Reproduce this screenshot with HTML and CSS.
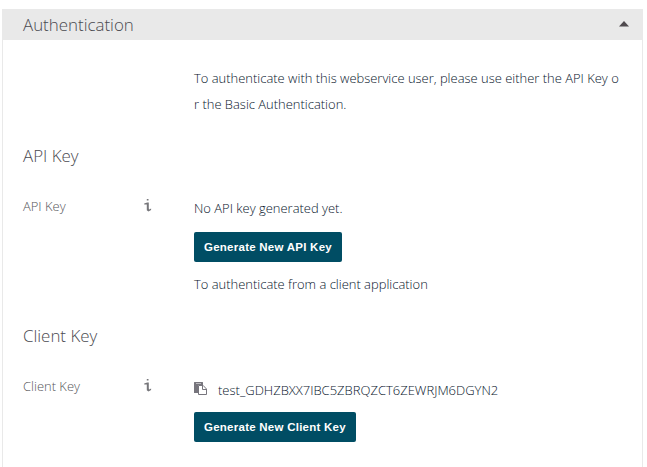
FILE: index.html
```html
<!DOCTYPE html>
<html lang="en">
<head>
<meta charset="utf-8">
<title>Authentication</title>
<link rel="stylesheet" href="styles.css">
</head>
<body>
<main class="panel">
  <header class="panel-header">
    <h1>Authentication</h1>
    <svg class="caret" viewBox="0 0 10 6"><path d="M0 5.5 5 0l5 5.5z"/></svg>
  </header>
  <div class="panel-body">
    <p class="intro">To authenticate with this webservice user, please use either the API Key or the Basic Authentication.</p>
    <h2>API Key</h2>
    <section class="row">
      <span class="label">API Key</span>
      <svg class="info" viewBox="0 0 8 13"><path d="M2.8 0h1.7v1.6H2.8zM.2 4.4 3.2 3.4h1.6v6.2l.4.8 1.9-.8v1.3L4.4 12.4 2.8 11.2V5.6H.2z"/></svg>
      <div class="content">
        <p class="value"><span class="text">No API key generated yet.</span></p>
        <button type="button">Generate New API Key</button>
        <p class="note"><span class="text">To authenticate from a client application</span></p>
      </div>
    </section>
    <h2>Client Key</h2>
    <section class="row">
      <span class="label">Client Key</span>
      <svg class="info" viewBox="0 0 8 13"><path d="M2.8 0h1.7v1.6H2.8zM.2 4.4 3.2 3.4h1.6v6.2l.4.8 1.9-.8v1.3L4.4 12.4 2.8 11.2V5.6H.2z"/></svg>
      <div class="content">
        <p class="value key"><svg class="paste" viewBox="0 0 13 13"><path fill-rule="evenodd" d="M0 .5Q0 0 .5 0h8q.5 0 .5.5V3H5Q4 3 4 4v7H.5q-.5 0-.5-.5zM2 1v.6h5V1z"/><path class="sheet" d="M4.5 3.5h4.7L12.5 7v5.5h-8zM8.5 3.5v4h4"/></svg><span class="text">test_GDHZBXX7IBC5ZBRQZCT6ZEWRJM6DGYN2</span></p>
        <button type="button">Generate New Client Key</button>
      </div>
    </section>
  </div>
</main>
</body>
</html>
```
FILE: styles.css
```css
* { box-sizing: border-box; }

body {
  margin: 0;
  padding: 9px 4px 0 2px;
  height: 467px;
  background: #fff;
  color: #08152c;
  font: 300 12.96px/26px "Open Sans", "Noto Sans", sans-serif;
}

h1, h2, p { margin: 0; }

.panel {
  height: 458px;
  border: 1px solid #e9e9e9;
  border-width: 0 1px;
}

.panel-header {
  display: flex;
  align-items: center;
  justify-content: space-between;
  height: 31px;
  margin: 0 -1px;
  padding: 0 14px 0 21px;
  background: #e9e9e9;
}

h1, h2 {
  color: #4a4a50;
  font-size: 16.9px;
  font-weight: 300;
  line-height: 31px;
}

.caret {
  width: 10px;
  height: 6px;
  margin-top: -2px;
  fill: #4f4a4e;
}

.panel-body { padding: 25px 20px 0; }

.intro {
  width: 427px;
  margin-left: 171px;
  word-break: break-all;
}

h2 { margin-top: 23px; }

.row {
  display: grid;
  grid-template-columns: 121px 50px 1fr;
  align-items: start;
  height: 104px;
  margin-top: 22px;
}

.label { color: #55555a; }

.info {
  width: 8px;
  height: 13px;
  margin-top: 6px;
  fill: #77777b;
}

.value {
  display: flex;
  align-items: center;
  height: 28px;
  padding-top: 2px;
}

.key {
  padding-top: 6px;
  font-size: 13px;
}

.paste {
  width: 13px;
  height: 13px;
  margin: -3px 11px 0 0;
  fill: #77757d;
}

.sheet {
  fill: #fff;
  stroke: #77757d;
  stroke-width: 1;
}

button {
  display: block;
  height: 30px;
  margin-top: 11px;
  padding: 0 9.8px 0 10px;
  border: 0;
  border-radius: 2px;
  background: #004d64;
  color: #fff;
  font: bold 11.5px "Liberation Sans", Arial, sans-serif;
  letter-spacing: .25px;
}

.note { margin-top: 9px; }
```
